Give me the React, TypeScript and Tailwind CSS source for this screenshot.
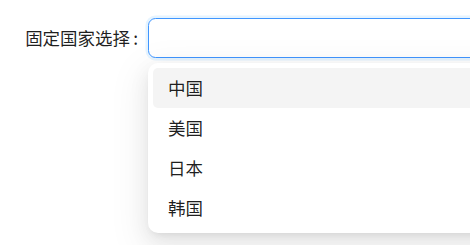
import React from "react";

const items = ["中国", "美国", "日本", "韩国"];

export default function App() {
  return (
    <div
      className="relative w-[470px] h-[245px] overflow-hidden bg-white text-[17.5px] text-[rgba(0,0,0,0.88)]"
      style={{ fontFamily: '"Noto Sans CJK SC", "Noto Sans", sans-serif' }}
    >
      <div className="flex flex-col pt-[18px] w-[600px]">
        <div className="flex items-center h-[40px]">
          <div className="w-[148px] shrink-0 pr-[10px] flex justify-end items-center leading-none whitespace-nowrap">
            <span>固定国家选择</span>
            <span className="ml-[3px]">:</span>
          </div>
          <div className="relative w-[360px] shrink-0">
            <div className="h-[40px] rounded-[7.5px] border border-[#4096ff] bg-white shadow-[0_0_0_2.5px_rgba(5,145,255,0.1)]" />
            <div className="absolute left-0 top-[45px] w-[360px] rounded-[10px] bg-white p-[5px] z-10 shadow-[0_7px_20px_0_rgba(0,0,0,0.08),0_4px_8px_-5px_rgba(0,0,0,0.12),0_11px_35px_10px_rgba(0,0,0,0.05)]">
              {items.map((it, i) => (
                <div
                  key={it}
                  className={`h-[40px] flex items-center px-[15px] rounded-[5px] ${i === 0 ? "bg-[#f4f4f4]" : ""}`}
                >
                  {it}
                </div>
              ))}
            </div>
          </div>
        </div>
        <div className="flex mt-[130px]">
          <div className="w-[148px] shrink-0" />
          <div className="w-[360px] h-[40px] shrink-0 rounded-[7.5px] border border-[#d9d9d9] bg-white" />
        </div>
      </div>
    </div>
  );
}
